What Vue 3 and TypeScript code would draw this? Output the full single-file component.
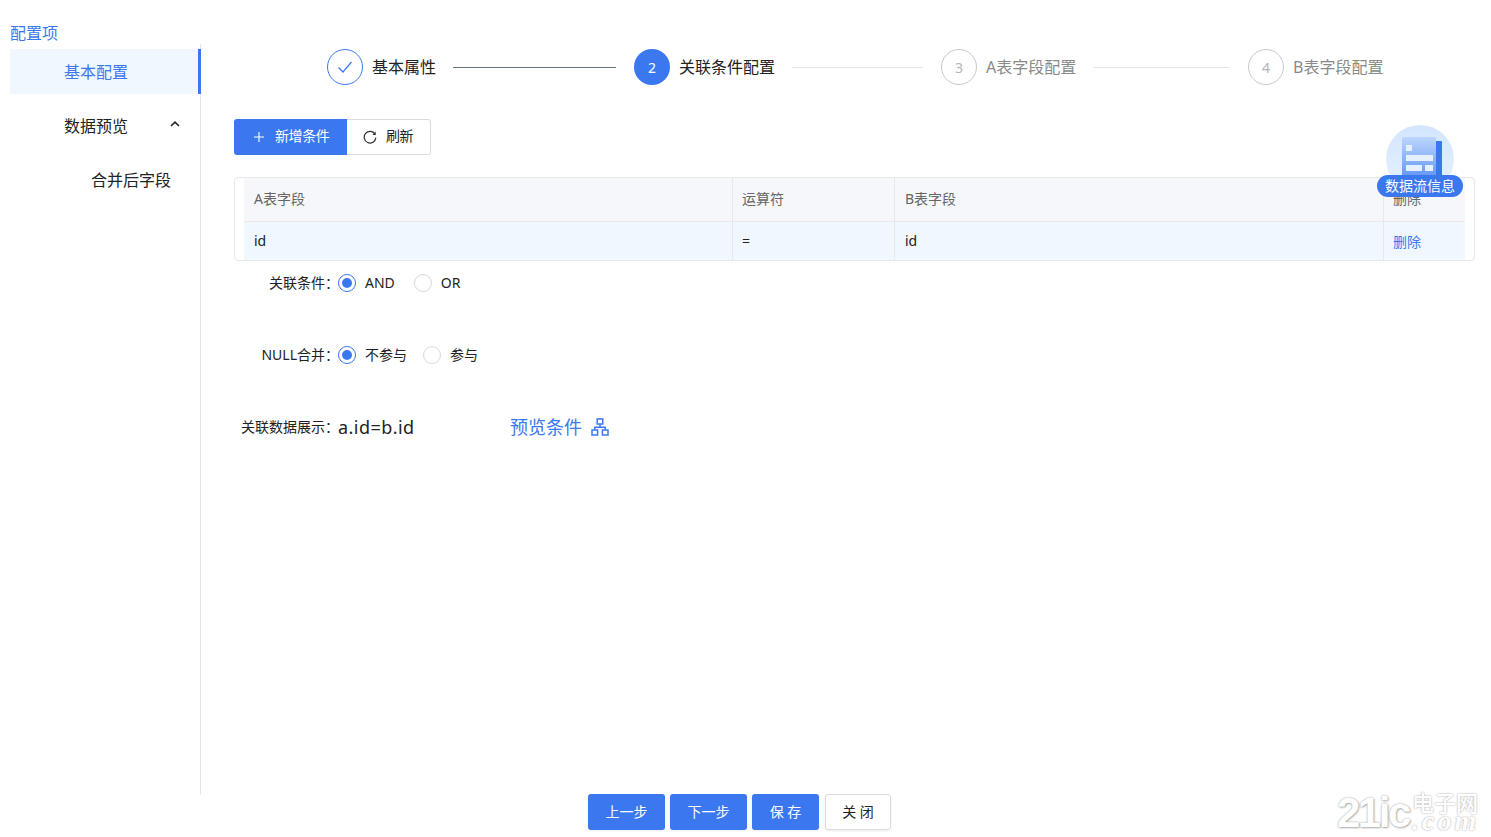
<script setup lang="ts">
interface Step { no: string; title: string; state: 'done' | 'active' | 'todo'; lineWidth: number; lineDark?: boolean; width: number }
const steps: Step[] = [
  { no: '1', title: '基本属性', state: 'done', lineWidth: 163, lineDark: true, width: 307 },
  { no: '2', title: '关联条件配置', state: 'active', lineWidth: 131, width: 307 },
  { no: '3', title: 'A表字段配置', state: 'todo', lineWidth: 136, width: 307 },
  { no: '4', title: 'B表字段配置', state: 'todo', lineWidth: 0, width: 140 }
]
</script>

<template>
  <div class="page">
    <div class="body">
      <aside class="side">
        <div class="side-title">配置项</div>
        <nav class="menu">
          <div class="menu-item selected">基本配置</div>
          <div class="menu-item parent">
            <span class="parent-text">数据预览</span>
            <svg class="chev" viewBox="0 0 10 6" width="10" height="6"><path d="M1 5 L5 1.2 L9 5" fill="none" stroke="#222" stroke-width="1.6" /></svg>
          </div>
          <div class="menu-item child">合并后字段</div>
        </nav>
      </aside>

      <main class="main">
        <div class="steps">
          <div v-for="s in steps" :key="s.no" class="step" :class="s.state" :style="{ width: s.width + 'px' }">
            <span class="dot">
              <svg v-if="s.state === 'done'" viewBox="0 0 16 16" width="16" height="16"><path d="M1.5 8.5 L6 13 L14.5 3" fill="none" stroke="#3b78f0" stroke-width="1.2" /></svg>
              <template v-else>{{ s.no }}</template>
            </span>
            <span class="step-title">{{ s.title }}</span>
            <span v-if="s.lineWidth" class="line" :class="{ dark: s.lineDark }" :style="{ width: s.lineWidth + 'px' }"></span>
          </div>
        </div>

        <div class="toolbar">
          <button class="tb primary">
            <svg viewBox="0 0 12 12" width="12" height="12"><path d="M6 1 V11 M1 6 H11" stroke="#fff" stroke-width="1.1" fill="none" /></svg>
            <span class="tb-text">新增条件</span>
          </button>
          <button class="tb plain">
            <svg viewBox="0 0 14 14" width="14" height="14"><path d="M12.2 4.6 A5.8 5.8 0 1 0 12.8 7.6" fill="none" stroke="#333" stroke-width="1.2" /><path d="M12.7 1.6 V5 H9.4" fill="#333" stroke="none" /></svg>
            <span class="tb-text">刷新</span>
          </button>
        </div>

        <div class="table-wrap">
          <div class="grid head">
            <div class="cell">A表字段</div>
            <div class="cell">运算符</div>
            <div class="cell">B表字段</div>
            <div class="cell">删除</div>
          </div>
          <div class="grid row">
            <div class="cell">id</div>
            <div class="cell">=</div>
            <div class="cell">id</div>
            <div class="cell link">删除</div>
          </div>
          <div class="flow">
            <div class="flow-circle">
              <svg viewBox="0 0 40 42" width="40" height="42">
                <defs>
                  <linearGradient id="docg" x1="0" y1="0" x2="0" y2="1">
                    <stop offset="0" stop-color="#bcd6fd" />
                    <stop offset="1" stop-color="#5f93f5" />
                  </linearGradient>
                </defs>
                <rect x="33" y="4" width="7" height="38" rx="1" fill="#3b78f0" />
                <rect x="0" y="0" width="34" height="42" rx="1.5" fill="url(#docg)" />
                <rect x="4" y="8" width="6" height="6" fill="#e6effe" />
                <rect x="4" y="18" width="27" height="6" fill="#e6effe" />
                <rect x="4" y="28" width="16" height="6" fill="#e6effe" />
                <rect x="23" y="28" width="8" height="6" fill="#e6effe" />
              </svg>
            </div>
            <div class="flow-label">数据流信息</div>
          </div>
        </div>

        <div class="form-row first">
          <label class="lbl">关联条件：</label>
          <span class="radio on"></span><span class="opt gap-and">AND</span>
          <span class="radio"></span><span class="opt">OR</span>
        </div>
        <div class="form-row">
          <label class="lbl">NULL合并：</label>
          <span class="radio on"></span><span class="opt gap-no">不参与</span>
          <span class="radio"></span><span class="opt">参与</span>
        </div>
        <div class="form-row">
          <label class="lbl">关联数据展示：</label>
          <span class="expr">a.id=b.id</span>
          <span class="preview">预览条件</span>
          <svg class="tree" viewBox="0 0 18 18" width="18" height="18">
            <g fill="none" stroke="#3b78f0" stroke-width="1.5">
              <rect x="6.2" y="1" width="5.6" height="5" />
              <rect x="1" y="12" width="5.6" height="5" />
              <rect x="11.4" y="12" width="5.6" height="5" />
              <path d="M9 6 V9.2 M3.8 12 V9.2 H14.2 V12" />
            </g>
          </svg>
        </div>
      </main>
    </div>

    <footer class="foot">
      <button class="fb blue w77">上一步</button>
      <button class="fb blue w77">下一步</button>
      <button class="fb blue w67">保 存</button>
      <button class="fb white">关 闭</button>
    </footer>

    <div class="mark">
      <span class="mark-num">21ic</span>
      <span class="mark-side">
        <span class="mark-cn">电子网</span>
        <span class="mark-com">.com</span>
      </span>
    </div>
  </div>
</template>

<style scoped>
.page {
  position: relative;
  width: 1491px;
  height: 837px;
  overflow: hidden;
  background: #fff;
  color: #222;
  font-family: "Noto Sans", "Noto Sans CJK SC", sans-serif;
  font-size: 14px;
}
.body { display: flex; height: 795px; }
.side { width: 201px; flex: none; padding-left: 10px; box-sizing: border-box; display: flex; flex-direction: column; }
.side-title { height: 44px; padding-top: 23px; box-sizing: border-box; line-height: 20px; color: #3b78f0; font-size: 16px; }
.menu { flex: 1; border-right: 1px solid #e6e6e6; padding-top: 5px; }
.menu-item { height: 45px; line-height: 47px; font-size: 16px; margin-bottom: 9px; padding-left: 54px; margin-right: -1px; box-sizing: border-box; }
.selected { background: #f0f7ff; color: #3b78f0; border-right: 3px solid #3b78f0; }
.parent { display: flex; justify-content: space-between; align-items: center; padding-right: 21px; }
.parent-text { margin-top: 2px; }
.chev { margin-top: -3px; }
.child { padding-left: 81px; }

.main { flex: 1; min-width: 0; padding-left: 33px; padding-right: 16px; }
.steps { display: flex; align-items: center; padding-left: 93px; margin-top: 49px; height: 36px; }
.step { display: flex; align-items: center; flex: none; }
.dot { width: 36px; height: 36px; box-sizing: border-box; border-radius: 50%; display: flex; align-items: center; justify-content: center; font-size: 14px; flex: none; }
.step-title { font-size: 16px; margin-left: 9px; white-space: nowrap; line-height: 36px; }
.line { height: 1px; background: #e6e6e6; margin-left: auto; margin-right: 18px; }
.line.dark { background: #6b7280; }
.done .dot { border: 1px solid #3b78f0; }
.active .dot { background: #3b78f0; color: #fff; }
.todo .dot { border: 1px solid #c8c8c8; color: #b5b5b5; }
.todo .step-title { color: #8a8a8a; }

.toolbar { display: flex; margin-top: 34px; height: 36px; }
.tb { display: flex; align-items: center; height: 36px; box-sizing: border-box; font: inherit; font-size: 14px; cursor: pointer; }
.tb-text { margin-top: -4px; letter-spacing: -0.4px; }
.primary { width: 113px; background: #3b78f0; color: #fff; border: 0; border-radius: 3px 0 0 3px; padding-left: 19px; gap: 10px; }
.plain { width: 84px; background: #fff; color: #222; border: 1px solid #dcdcdc; border-left: 0; border-radius: 0 3px 3px 0; padding-left: 16px; gap: 9px; }

.table-wrap { position: relative; margin-top: 22px; height: 84px; box-sizing: border-box; border: 1px solid #e8e8e8; border-radius: 4px; padding: 0 9px; font-size: 14px; }
.grid { display: grid; grid-template-columns: 489px 162px 489px 81px; }
.head { height: 43px; background: #f5f7fa; color: #666; border-bottom: 1px solid #e8e8e8; box-sizing: content-box; }
.head .cell { padding-bottom: 3px; }
.row { height: 38px; background: #f0f7ff; }
.cell { display: flex; align-items: center; padding: 0 0 1px 9px; border-right: 1px solid #e8e8e8; box-sizing: border-box; }
.cell:nth-child(odd) { padding-left: 10px; }
.cell:last-child { border-right: 0; }
.row .link { color: #3b78f0; }

.flow { position: absolute; right: 11px; top: -53px; width: 86px; height: 72px; display: flex; flex-direction: column; align-items: center; }
.flow-circle { width: 68px; height: 68px; border-radius: 50%; background: linear-gradient(180deg, #d3e6fe, #e6f1ff); padding: 12px 0 0 16px; box-sizing: border-box; flex: none; }
.flow-circle svg { display: block; }
.flow-label { position: absolute; left: 0; bottom: 0; width: 86px; height: 22px; line-height: 21px; border-radius: 11px; background: #3b78f0; color: #fff; font-size: 14px; text-align: center; white-space: nowrap; }

.form-row { display: flex; align-items: center; height: 24px; margin-top: 48px; }
.form-row.first { margin-top: 10px; }
.lbl { width: 105px; margin-right: -1px; margin-top: -2px; text-align: right; font-size: 14px; white-space: nowrap; }
.radio { width: 18px; height: 18px; border-radius: 50%; border: 1px solid #d9d9d9; box-sizing: border-box; flex: none; margin-right: 9px; position: relative; }
.radio.on { border-color: #3b78f0; }
.radio.on::after { content: ""; position: absolute; inset: 3px; border-radius: 50%; background: #3b78f0; }
.opt { font-size: 14px; margin-top: -2px; }
.gap-and { margin-right: 19px; }
.gap-no { margin-right: 16px; }
.expr { font-size: 18px; letter-spacing: 0.45px; width: 172px; }
.preview { font-size: 18px; color: #3b78f0; margin-right: 9px; margin-top: -2px; }
.tree { flex: none; }

.foot { height: 42px; margin-top: -1px; display: flex; padding-left: 588px; gap: 5px; box-sizing: border-box; }
.fb { height: 36px; box-sizing: border-box; border-radius: 3px; font: inherit; font-size: 14px; border: 0; padding: 0 0 3px; cursor: pointer; box-shadow: 0 1px 3px rgba(0,0,0,.08); }
.blue { background: #3b78f0; color: #fff; }
.w77 { width: 77px; }
.w67 { width: 67px; }
.white { width: 66px; margin-left: 1px; background: #fff; color: #222; border: 1px solid #dcdcdc; }

.mark { position: absolute; left: 1337px; top: 792px; display: flex; align-items: flex-start; color: #fff; pointer-events: none; }
.mark-num { width: 75px; flex: none; font-family: "Liberation Sans", sans-serif; font-weight: 700; font-size: 42px; line-height: 42px; letter-spacing: -2.5px; text-shadow: 0 0 2px #9a9a9a, 1px 1px 2px #bbb; }
.mark-side { display: flex; flex-direction: column; line-height: 1; }
.mark-cn { font-size: 22px; line-height: 20px; text-shadow: 0 0 2px #9a9a9a; font-weight: 500; }
.mark-com { font-family: "Liberation Serif", serif; font-style: italic; font-weight: 700; font-size: 28px; letter-spacing: 3px; line-height: 18px; text-shadow: 0 0 2px #9a9a9a; }
</style>
